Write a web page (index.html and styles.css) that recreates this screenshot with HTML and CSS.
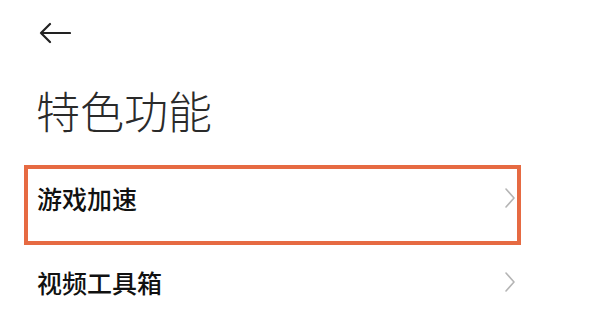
FILE: index.html
```html
<!DOCTYPE html>
<html lang="zh-CN">
<head>
    <meta charset="UTF-8">
    <meta name="viewport" content="width=device-width, initial-scale=1.0">
    <title>特色功能</title>
    <link rel="stylesheet" href="styles.css">
</head>
<body>
    <div class="page">
        <div class="top-bar">
            <button class="back-button" aria-label="返回">
                <svg width="32" height="22" viewBox="0 0 32 22">
                    <path d="M11 2 L2 11 L11 20 M2 11 H31" fill="none" stroke="#222" stroke-width="2.2" stroke-linecap="round" stroke-linejoin="round"/>
                </svg>
            </button>
        </div>
        <h1 class="page-title">特色功能</h1>
        <ul class="menu-list">
            <li class="menu-item highlighted">
                <span class="item-label">游戏加速</span>
                <svg class="chevron" width="10" height="20" viewBox="0 0 10 20">
                    <path d="M1 1 L9 10 L1 19" fill="none" stroke="#b5b5b5" stroke-width="1.6" stroke-linecap="round" stroke-linejoin="round"/>
                </svg>
            </li>
            <li class="menu-item">
                <span class="item-label">视频工具箱</span>
                <svg class="chevron" width="10" height="20" viewBox="0 0 10 20">
                    <path d="M1 1 L9 10 L1 19" fill="none" stroke="#b5b5b5" stroke-width="1.6" stroke-linecap="round" stroke-linejoin="round"/>
                </svg>
            </li>
        </ul>
    </div>
</body>
</html>
```

FILE: styles.css
```css
/* styles.css */

body {
    margin: 0;
    background-color: #ffffff;
    font-family: "Noto Sans CJK SC", "Noto Sans", sans-serif;
    color: #222;
}

.page {
    width: 600px;
    height: 318px;
    overflow: hidden;
}

.top-bar {
    height: 64px;
    padding: 22px 0 0 39px;
    box-sizing: border-box;
}

.back-button {
    display: block;
    background: none;
    border: none;
    padding: 0;
    cursor: pointer;
}

.page-title {
    margin: 24px 0 0 36px;
    font-size: 44px;
    line-height: 44px;
    font-weight: 300;
    color: #2a2a2a;
}

.menu-list {
    list-style: none;
    margin: 33px 0 0 24px;
    padding: 0;
    width: 497px;
}

.menu-item {
    display: flex;
    justify-content: space-between;
    align-items: flex-start;
    height: 80px;
    box-sizing: border-box;
    padding: 24px 6px 0 13px;
}

.menu-item.highlighted {
    border: 4px solid #e66a42;
    padding: 16px 2px 0 9px;
}

.item-label {
    font-size: 25px;
    line-height: 26px;
    font-weight: 500;
    color: #111;
}

.chevron {
    display: block;
    margin-top: 3px;
}
```
